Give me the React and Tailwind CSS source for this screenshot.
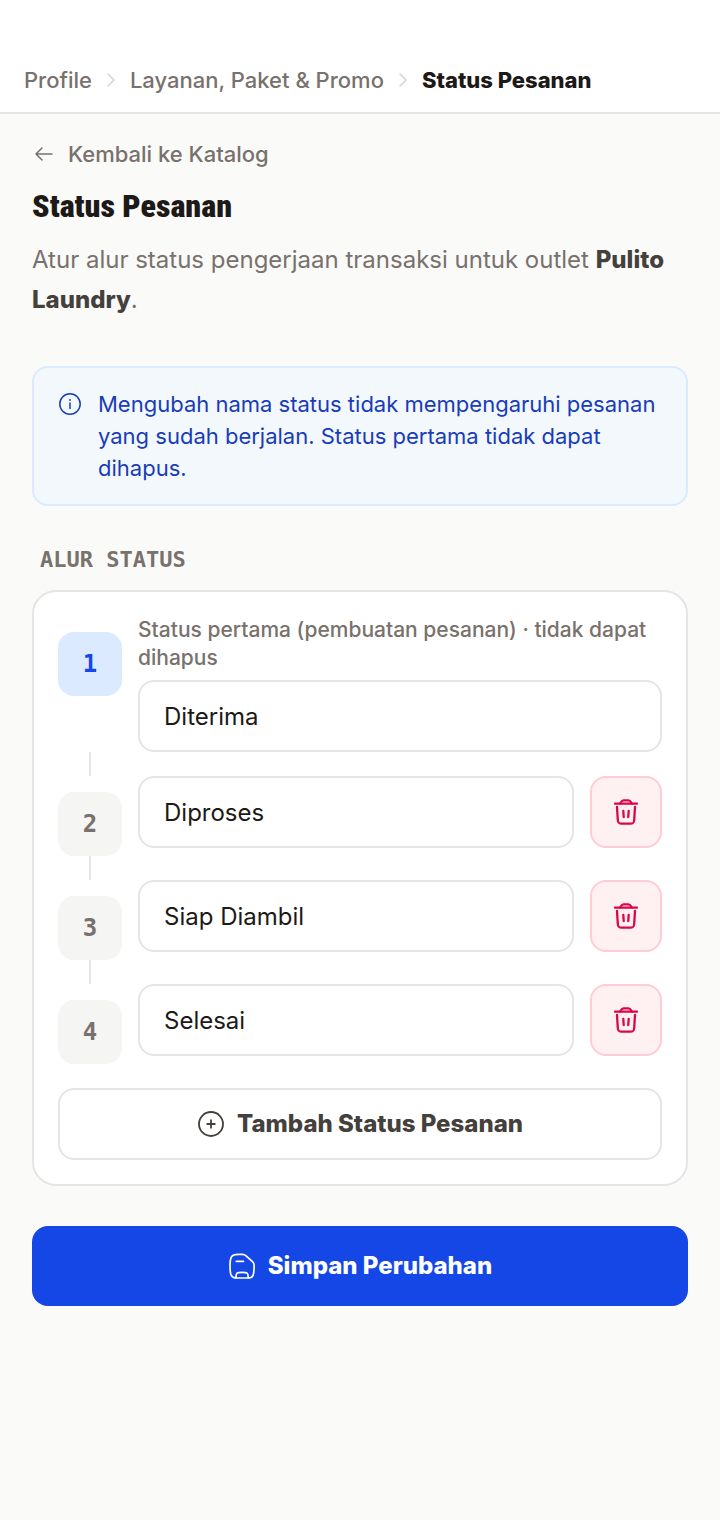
import React, { useState } from 'react';

const initialStatuses = [
    { id: 1, name: 'Diterima' },
    { id: 2, name: 'Diproses' },
    { id: 3, name: 'Siap Diambil' },
    { id: 4, name: 'Selesai' },
];

const ChevronIcon = () => (
    <svg width="10" height="16" viewBox="0 0 10 16" fill="none" stroke="#d6d3d1" strokeWidth="1.5" strokeLinecap="round" strokeLinejoin="round" aria-hidden="true">
        <path d="M2 2l6 6-6 6" />
    </svg>
);

const ArrowLeftIcon = () => (
    <svg width="20" height="20" viewBox="0 0 20 20" fill="none" stroke="currentColor" strokeWidth="1.5" strokeLinecap="round" strokeLinejoin="round" aria-hidden="true">
        <path d="M18 10H2M8 4l-6 6 6 6" />
    </svg>
);

const InfoIcon = () => (
    <svg className="shrink-0" width="24" height="24" viewBox="0 0 24 24" fill="none" stroke="currentColor" strokeWidth="1.5" strokeLinecap="round" strokeLinejoin="round" aria-hidden="true">
        <circle cx="12" cy="12" r="10.2" />
        <path d="M12 11v5.5" />
        <circle cx="12" cy="8" r="0.9" fill="currentColor" stroke="none" />
    </svg>
);

const TrashIcon = () => (
    <svg width="28" height="28" viewBox="0 0 28 28" fill="none" stroke="currentColor" strokeWidth="2.3" strokeLinecap="round" strokeLinejoin="round" aria-hidden="true">
        <path d="M3 5.700h22" />
        <path d="M8 5.500C9.300 5 9 2.300 11.500 2.300h5C19 2.300 18.700 5 20 5.500" />
        <path d="M5 9l.8 13c.2 3 1 3.700 4 3.700h8.400c3 0 3.800-.7 4-3.700L23 9" />
        <path d="M11.300 12.800l.4 6.200M16.700 12.800l-.4 6.200" />
    </svg>
);

const PlusCircleIcon = () => (
    <svg width="28" height="28" viewBox="0 0 28 28" fill="none" stroke="currentColor" strokeWidth="1.8" strokeLinecap="round" aria-hidden="true">
        <circle cx="14" cy="14" r="12" />
        <path d="M14 10.200v7.600M10.200 14h7.600" />
    </svg>
);

const SaveIcon = () => (
    <svg width="28" height="28" viewBox="0 0 28 28" fill="none" stroke="currentColor" strokeWidth="1.7" strokeLinecap="round" strokeLinejoin="round" aria-hidden="true">
        <path d="M2 14C2 4.500 3.500 2.500 10 2.300h4.500c1.500 0 2.300.4 3.300 1.300l6.700 6c1.200 1.100 1.600 2 1.600 3.600C26.100 23 25.500 26 19.500 26h-11C3 26 2 23 2 14z" />
        <path d="M8 25.800c0-4.800.3-5.500 6-5.500s6.200.7 6.200 5.500" />
        <path d="M8.300 9.300h7.200" />
    </svg>
);

const Breadcrumb = () => (
    <header className="bg-white border-b-2 border-[#e5e5e5] pt-12">
        <nav aria-label="Breadcrumb" className="flex items-center gap-3.5 h-16 px-6 text-[22px] font-medium text-[#78716c]">
            <a href="#profile">Profile</a>
            <ChevronIcon />
            <a href="#layanan">Layanan, Paket &amp; Promo</a>
            <ChevronIcon />
            <span aria-current="page" className="font-extrabold text-[#1c1917]">Status Pesanan</span>
        </nav>
    </header>
);

const StatusRow = ({ index, status, isLast, onRename, onRemove }) => {
    const isFirst = index === 0;
    const inputId = `status-${status.id}`;

    return (
        <li className="flex gap-4">
            <div className="flex flex-col items-center w-16 shrink-0 pt-4">
                <span
                    className={`flex items-center justify-center size-16 rounded-2xl text-2xl font-bold font-['DejaVu_Sans_Mono',monospace] ${
                        isFirst ? 'bg-[#dbeafe] text-[#1447e6]' : 'bg-[#f5f5f4] text-[#78716c]'
                    }`}
                >
                    {index + 1}
                </span>
                {!isLast && <span className="w-0.5 h-6 mt-auto bg-[#e5e5e5]" />}
            </div>

            <div className={`flex-1 min-w-0 ${isLast ? '' : 'pb-6'}`}>
                {isFirst && (
                    <label htmlFor={inputId} className="block mb-2 text-[21px] leading-7 font-medium text-[#78716c]">
                        Status pertama (pembuatan pesanan) · tidak dapat dihapus
                    </label>
                )}
                <div className="flex gap-4">
                    <input
                        id={inputId}
                        type="text"
                        aria-label={isFirst ? undefined : `Status ${index + 1}`}
                        value={status.name}
                        onChange={(e) => onRename(status.id, e.target.value)}
                        className="flex-1 min-w-0 h-18 px-6 rounded-2xl border-2 border-[#e5e5e5] bg-white text-2xl text-[#1c1917] outline-none focus:border-[#1447e6]"
                    />
                    {!isFirst && (
                        <button
                            type="button"
                            onClick={() => onRemove(status.id)}
                            className="flex items-center justify-center size-18 shrink-0 rounded-2xl border-2 border-[#ffccd3] bg-[#fff1f2] text-[#d90747]"
                            aria-label={`Hapus ${status.name}`}
                        >
                            <TrashIcon />
                        </button>
                    )}
                </div>
            </div>
        </li>
    );
};

const App = () => {
    const [statuses, setStatuses] = useState(initialStatuses);

    const renameStatus = (id, name) => {
        setStatuses(statuses.map(s => (s.id === id ? { ...s, name } : s)));
    };

    const removeStatus = (id) => {
        setStatuses(statuses.filter(s => s.id !== id));
    };

    const addStatus = () => {
        setStatuses([...statuses, { id: Date.now(), name: '' }]);
    };

    return (
        <div className="min-h-screen bg-[#fafaf9] font-['Inter',sans-serif]">
            <Breadcrumb />

            <main className="px-8 pt-6 pb-12">
                {/* Page heading */}
                <a href="#katalog" className="inline-flex items-center gap-3.5 h-8 text-[22px] font-medium text-[#78716c]">
                    <span className="flex justify-end w-5.5"><ArrowLeftIcon /></span>
                    Kembali ke Katalog
                </a>
                <h1 className="mt-4 text-[32px] leading-10 font-black text-[#1c1917] font-['Roboto_Condensed','Open_Sans_Condensed',Roboto,sans-serif]">
                    Status Pesanan
                </h1>
                <p className="mt-3.5 text-2xl leading-10 text-[#78716c]">
                    Atur alur status pengerjaan transaksi untuk outlet{' '}
                    <strong className="font-extrabold text-[#44403b]">Pulito Laundry</strong>.
                </p>

                {/* Notice */}
                <div className="flex gap-4 mt-11.5 px-6 py-5 rounded-2xl border-2 border-[#dbeafe] bg-[#f3f8fd] text-[#193cb8]">
                    <span className="pt-1"><InfoIcon /></span>
                    <p className="text-[22px] leading-8">
                        Mengubah nama status tidak mempengaruhi pesanan yang sudah berjalan. Status pertama tidak dapat dihapus.
                    </p>
                </div>

                {/* Status flow */}
                <h2 className="mt-10 mb-4 px-2 text-[22px] leading-7 font-bold text-[#78716c] font-['DejaVu_Sans_Mono',monospace]">
                    ALUR STATUS
                </h2>
                <section className="p-6 rounded-3xl border-2 border-[#e5e5e5] bg-white">
                    <ol>
                        {statuses.map((status, index) => (
                            <StatusRow
                                key={status.id}
                                index={index}
                                status={status}
                                isLast={index === statuses.length - 1}
                                onRename={renameStatus}
                                onRemove={removeStatus}
                            />
                        ))}
                    </ol>
                    <button
                        type="button"
                        onClick={addStatus}
                        className="flex items-center justify-center gap-3 w-full h-18 mt-6 rounded-2xl border-2 border-[#e5e5e5] bg-white text-2xl font-extrabold text-[#44403b]"
                    >
                        <PlusCircleIcon />
                        Tambah Status Pesanan
                    </button>
                </section>

                <button
                    type="button"
                    className="flex items-center justify-center gap-3 w-full h-20 mt-10 rounded-2xl bg-[#1447e6] text-2xl font-extrabold text-white"
                >
                    <SaveIcon />
                    Simpan Perubahan
                </button>
            </main>
        </div>
    );
};

export default App;
